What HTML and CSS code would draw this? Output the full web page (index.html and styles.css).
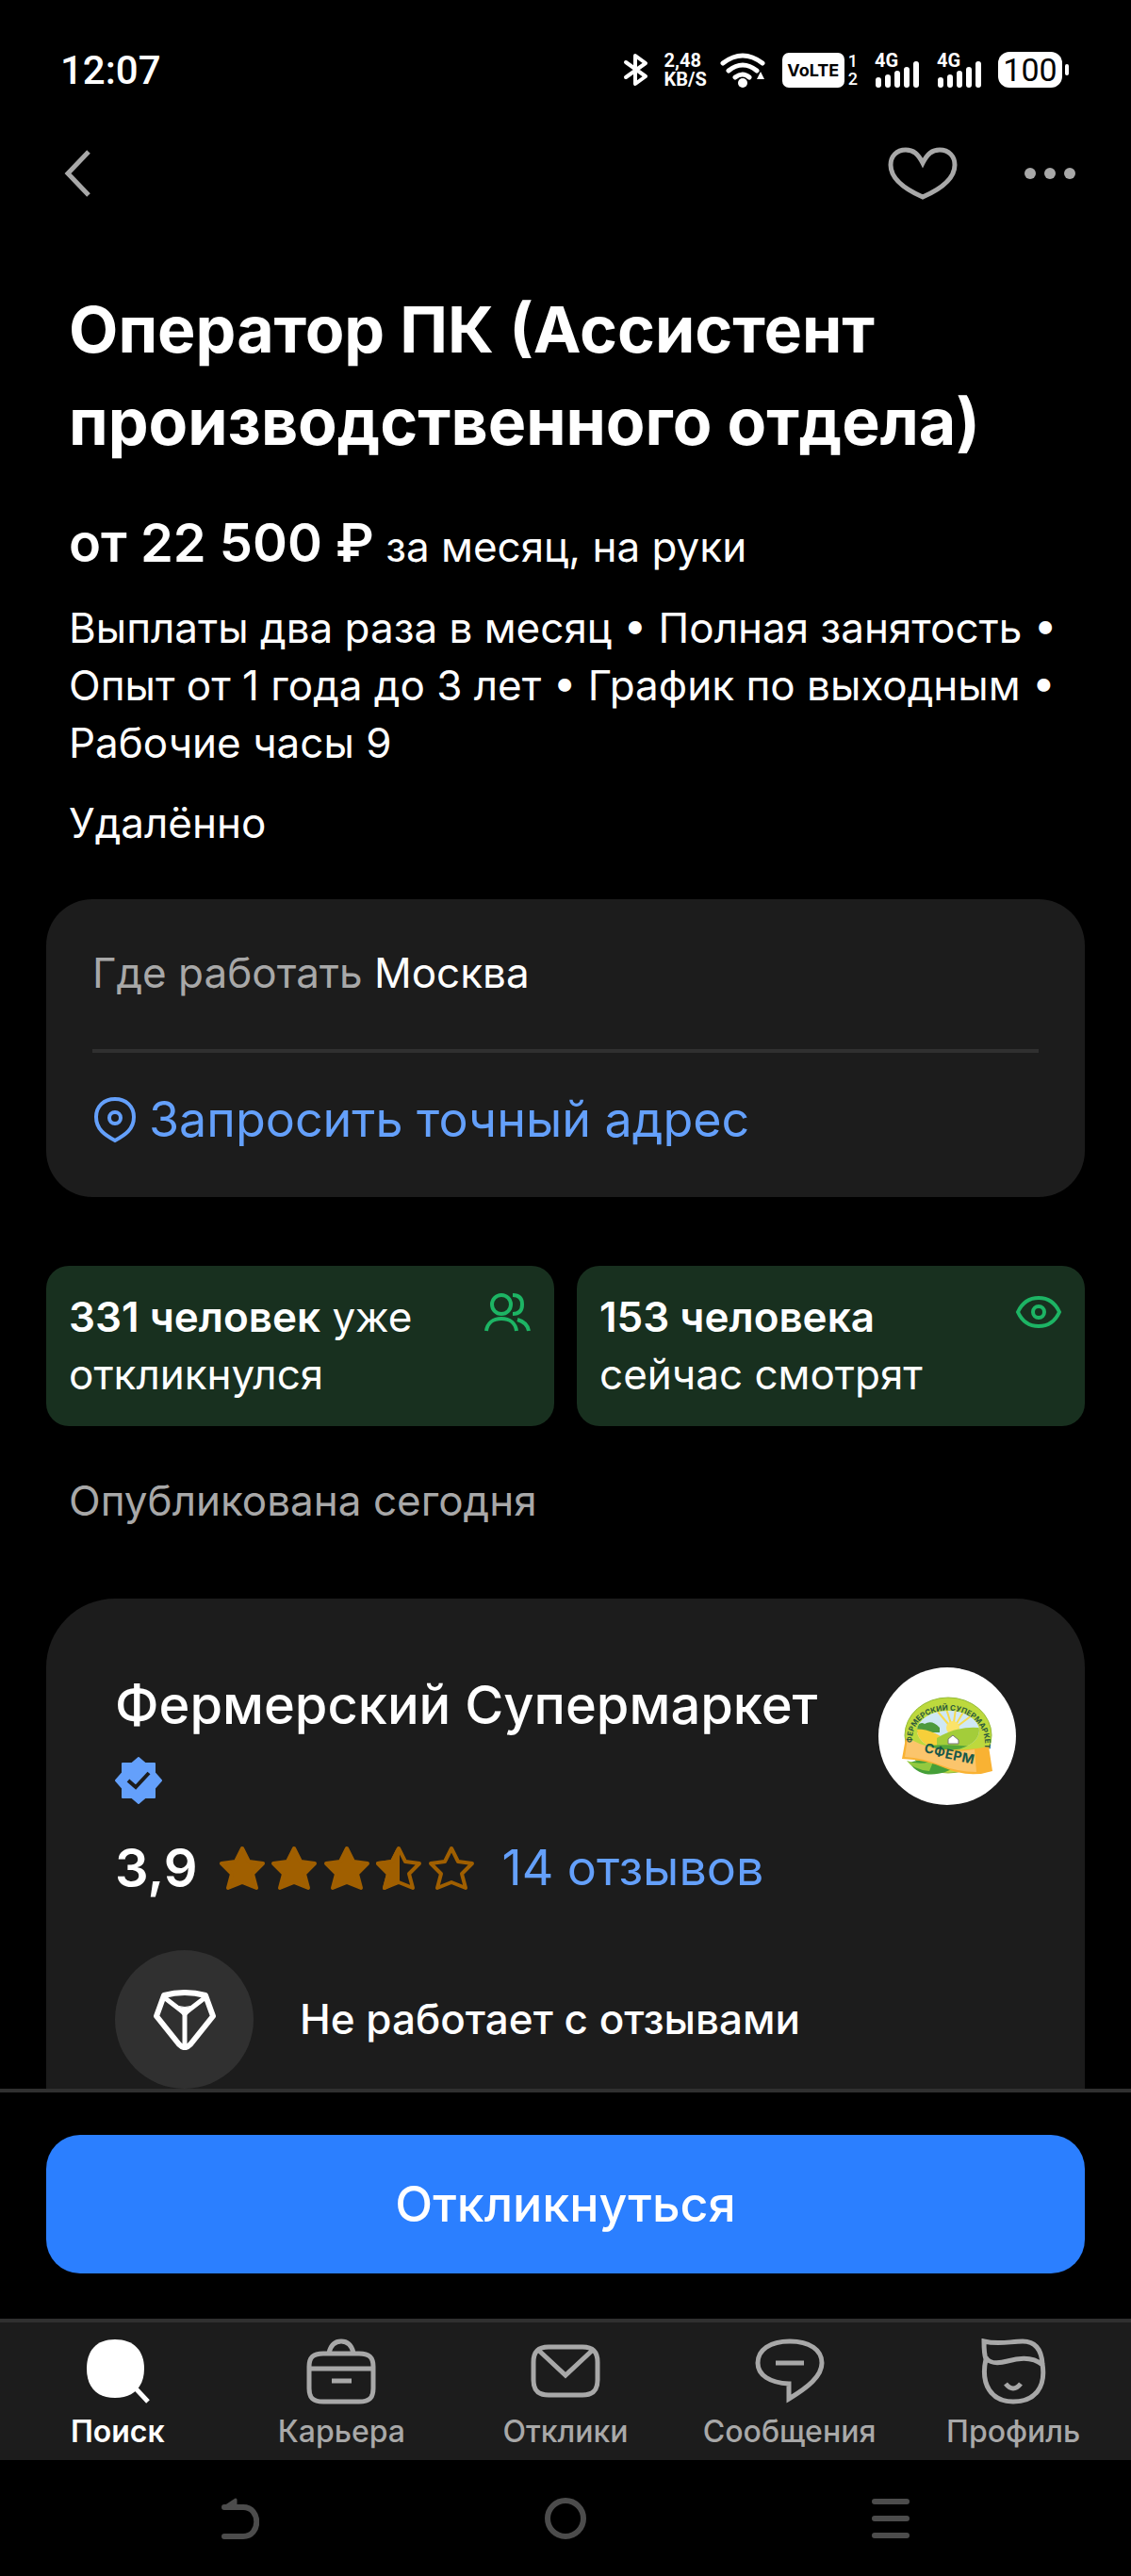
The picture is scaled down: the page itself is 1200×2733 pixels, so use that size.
FILE: index.html
```html
<!DOCTYPE html>
<html lang="ru">

<head>
  <meta charset="UTF-8">
  <meta name="viewport" content="width=device-width, initial-scale=1">
  <title>Оператор ПК (Ассистент производственного отдела)</title>
  <link rel="stylesheet" href="styles.css">
</head>

<body>
  <div class="app">
    <div class="status-bar">
      <span class="clock">12:07</span>
      <div class="status-icons">
        <svg class="bluetooth" width="28" height="36" viewBox="0 0 28 36" fill="none" stroke="#fff" stroke-width="4" stroke-linecap="round" stroke-linejoin="round">
          <path d="M3 10l21 15-11 8V3l11 8L3 26" />
        </svg>
        <span class="speed">2,48<br>KB/S</span>
        <svg class="wifi" width="48" height="38" viewBox="0 0 48 38" fill="none" stroke="#fff" stroke-width="5" stroke-linecap="round">
          <path d="M3 12q21-16 42 0M9 20q15-12 30 0M16 27q8-6 15 0" />
          <circle cx="24" cy="33" r="5" fill="#fff" stroke="none" />
          <path d="M43 21l4 8h-8z" fill="#fff" stroke="none" />
        </svg>
        <span class="volte">VoLTE</span>
        <span class="sims">1<br>2</span>
        <span class="signal">
          <span class="signal-type">4G</span>
          <svg width="48" height="28" viewBox="0 0 48 28" stroke="#fff" stroke-width="6" stroke-linecap="round">
            <path d="M4 20v5M14 17v8M24 13v12M34 9v16M44 3v22" />
          </svg>
        </span>
        <span class="signal">
          <span class="signal-type">4G</span>
          <svg width="48" height="28" viewBox="0 0 48 28" stroke="#fff" stroke-width="6" stroke-linecap="round">
            <path d="M4 20v5M14 17v8M24 13v12M34 9v16M44 3v22" />
          </svg>
        </span>
        <span class="battery">100</span>
        <span class="battery-tip"></span>
      </div>
    </div>

    <header class="top-bar">
      <button class="icon-btn" aria-label="Назад">
        <svg width="32" height="50" viewBox="0 0 32 50" fill="none" stroke="#a8a8a8" stroke-width="5">
          <path d="M28 2L6 25l22 23" />
        </svg>
      </button>
      <div class="top-actions">
        <button class="icon-btn" aria-label="В избранное">
          <svg width="74" height="56" viewBox="0 0 74 56" fill="none" stroke="#a8a8a8" stroke-width="5">
            <path d="M37 17C32 7 27 3 19 3 9 3 3 10 3 19c0 16 18 27 34 34 16-7 34-18 34-34C71 10 65 3 55 3c-8 0-13 4-18 14z" />
          </svg>
        </button>
        <button class="icon-btn" aria-label="Ещё">
          <svg width="56" height="14" viewBox="0 0 56 14" fill="#a8a8a8">
            <circle cx="7" cy="7" r="6" />
            <circle cx="28" cy="7" r="6" />
            <circle cx="49" cy="7" r="6" />
          </svg>
        </button>
      </div>
    </header>

    <main class="content">
      <section class="vacancy">
        <h1>Оператор ПК (Ассистент производственного отдела)</h1>
        <p class="salary"><strong>от 22 500 ₽</strong> за месяц, на руки</p>
        <p class="terms">Выплаты два раза в месяц • Полная занятость • Опыт от 1 года до 3 лет • График по выходным • Рабочие часы 9</p>
        <p class="remote">Удалённо</p>
      </section>

      <section class="address">
        <p class="place"><span class="muted">Где работать</span> Москва</p>
        <a class="address-link" href="#address">
          <svg width="48" height="50" viewBox="0 0 48 50" fill="none" stroke="currentColor" stroke-width="4">
            <path d="M24 3C12 3 4 11 4 22c0 13 9 19 20 25 11-6 20-12 20-25C44 11 36 3 24 3z" />
            <circle cx="24" cy="23" r="6" />
          </svg>
          Запросить точный адрес
        </a>
      </section>

      <section class="stats">
        <div class="stat">
          <p><strong>331 человек</strong> уже откликнулся</p>
          <svg width="50" height="42" viewBox="0 0 50 42" fill="none" stroke="#1db464" stroke-width="4">
            <circle cx="18" cy="13" r="10" />
            <path d="M30 3c7 0 10 4 10 10s-3 10-10 10M2 41c1-8 7-13 16-13s15 5 16 13M35 29c7 2 11 6 12 12" />
          </svg>
        </div>
        <div class="stat">
          <p><strong>153 человека</strong> сейчас смотрят</p>
          <svg width="50" height="42" viewBox="0 0 50 42" fill="none" stroke="#1db464" stroke-width="4">
            <path d="M3 21C8 10 15 6 25 6s17 4 22 15c-5 11-12 15-22 15S8 32 3 21z" />
            <circle cx="25" cy="21" r="6" />
          </svg>
        </div>
      </section>

      <p class="published">Опубликована сегодня</p>

      <section class="company">
        <div class="company-head">
          <h2>
            Фермерский Супермаркет
            <svg class="verified" width="50" height="50" viewBox="0 0 50 50">
              <path d="M25 1l7 6h10v10l7 8-7 8v10H32l-7 6-7-6H8V33l-7-8 7-8V7h10z" fill="#64a0fb" stroke="#64a0fb" stroke-width="2" stroke-linejoin="round" />
              <path d="M14 25l8 7 14-15" fill="none" stroke="#1c1c1c" stroke-width="4" />
            </svg>
          </h2>
          <svg class="logo" width="146" height="146" viewBox="0 0 146 146">
            <defs>
              <path id="ring" d="M36 80C32 35 115 32 113 84" />
              <clipPath id="field"><ellipse cx="74" cy="67" rx="33" ry="21" /></clipPath>
            </defs>
            <circle cx="73" cy="73" r="73" fill="#fff" />
            <ellipse cx="74" cy="72" rx="46" ry="40" fill="#bdd93d" stroke="#94bb38" />
            <g clip-path="url(#field)">
              <path d="M30 40h90v60H30z" fill="#cfe8f5" />
              <path d="M79 66L63 47M79 66L72 44M79 66L82 44M79 66L91 46M79 66L99 51" stroke="#f7db4f" stroke-width="2" />
              <circle cx="79" cy="64" r="7" fill="#fbe36a" />
              <path d="M39 64q5-7 10-4 8-5 16 4v5H39z" fill="#4d9a3e" />
              <path d="M36 66q20-3 44 17l-44 2z" fill="#f6cf3a" />
              <path d="M62 75q25-15 52-10v36H62z" fill="#a3cd3a" />
              <path d="M52 83q28-2 58 2v20H52z" fill="#55a63a" />
              <path d="M74 76l5-4 6 5v4H74z" fill="#fff" stroke="#777" />
            </g>
            <path d="M33 101c12 20 38 12 50 4-13-8-37-9-50-4z" fill="#459f38" />
            <path d="M30 99q17 6 29-1l-5 12q-18-2-24-11z" fill="#93c93f" />
            <path d="M29 75q35 19 88 9l4 26q-24 8-50-3-20-9-46-10z" fill="#f9b233" />
            <path d="M31 75q35 19 71 12l2 24q-20 0-37-7-20-8-39-9z" fill="#fbc56c" />
            <text class="logo-ring"><textPath href="#ring">ФЕРМЕРСКИЙ СУПЕРМАРКЕТ</textPath></text>
            <text class="logo-name" x="48" y="90" rotate="12" dy="0 3 3 2 2">СФЕРМ</text>
          </svg>
        </div>
        <div class="rating">
          <span class="score">3,9</span>
          <svg width="274" height="50" viewBox="0 0 274 50" fill="#a05f00" stroke="#a05f00" stroke-width="4" stroke-linejoin="round">
            <defs>
              <path id="star" d="M25 4l7 14 15 2-11 11 4 15-15-6-15 6 4-15L3 20l15-2z" />
            </defs>
            <use href="#star" />
            <use href="#star" x="55" />
            <use href="#star" x="111" />
            <use href="#star" x="166" fill="none" />
            <path d="M190 6v33l-14 7 4-15-11-11 15-2z" />
            <use href="#star" x="222" fill="none" />
          </svg>
          <a href="#reviews">14 отзывов</a>
        </div>
        <div class="feature">
          <span class="feature-icon">
            <svg width="68" height="64" viewBox="0 0 68 64" fill="none" stroke="#fff" stroke-width="6" stroke-linejoin="round">
              <path d="M12 6Q34 0 56 6l8 22-24 30q-6 6-12 0L4 28z" />
              <path d="M12 8l22 17L56 8" stroke-width="5" />
              <path d="M34 24v36" stroke-width="5" />
              <path d="M24 17q10 3 20 0l-10 12z" fill="#fff" stroke-width="1" />
            </svg>
          </span>
          <p>Не работает с отзывами</p>
        </div>
      </section>
    </main>

    <div class="apply">
      <button class="apply-btn">Откликнуться</button>
    </div>

    <nav class="tabs">
      <a class="tab active" href="#search">
        <svg width="74" height="70" viewBox="0 0 74 70">
          <path d="M34 1c20 0 31 12 31 31S54 63 34 63 4 51 4 32 14 1 34 1z" fill="#fff" />
          <path d="M54 51l15 16" stroke="#fff" stroke-width="5" />
        </svg>
        Поиск
      </a>
      <a class="tab" href="#career">
        <svg width="74" height="70" viewBox="0 0 74 70" fill="none" stroke="currentColor" stroke-width="5">
          <path d="M18 16h38c11 0 15 4 15 14v23c0 10-4 14-15 14H18C7 67 3 63 3 53V30c0-10 4-14 15-14zM24 15c2-8 7-12 13-12s11 4 13 12M3 32h68M27 45h21" />
        </svg>
        Карьера
      </a>
      <a class="tab" href="#responses">
        <svg width="74" height="70" viewBox="0 0 74 70" fill="none" stroke="currentColor" stroke-width="5">
          <path d="M19 9h36c11 0 16 5 16 16v19c0 11-5 16-16 16H19C8 60 3 55 3 44V25C3 14 8 9 19 9zM9 13l28 26 28-26" />
        </svg>
        Отклики
      </a>
      <a class="tab" href="#messages">
        <svg width="74" height="70" viewBox="0 0 74 70" fill="none" stroke="currentColor" stroke-width="5">
          <path d="M37 3C16 3 3 12 3 26c0 13 13 21 33 22v16c20-12 35-24 35-38C71 12 58 3 37 3zM22 26h30" />
        </svg>
        Сообщения
      </a>
      <a class="tab" href="#profile">
        <svg width="74" height="70" viewBox="0 0 74 70" fill="none" stroke="currentColor" stroke-width="5">
          <path d="M6 3c16 4 28 0 41 0 14 0 20 9 21 24 4 25-8 40-31 40S2 49 8 22C6 16 6 10 6 3zM8 20c3 6 12 7 23 4 14-4 28-4 37 4" />
          <path d="M29 48q8 10 16 0" />
        </svg>
        Профиль
      </a>
    </nav>

    <div class="system-nav">
      <button class="icon-btn" aria-label="Назад">
        <svg width="40" height="44" viewBox="0 0 40 44" fill="none" stroke="#4c4c4c" stroke-width="6" stroke-linecap="round" stroke-linejoin="round">
          <path d="M3 41h20c19 0 19-31 0-31H3" />
          <path d="M3 10l12-8v8z" fill="#4c4c4c" stroke-width="3" />
        </svg>
      </button>
      <button class="icon-btn" aria-label="Домой">
        <svg width="44" height="44" viewBox="0 0 44 44" fill="none" stroke="#4c4c4c" stroke-width="6">
          <circle cx="22" cy="22" r="19" />
        </svg>
      </button>
      <button class="icon-btn" aria-label="Приложения">
        <svg width="40" height="44" viewBox="0 0 40 44" stroke="#4c4c4c" stroke-width="6" stroke-linecap="round">
          <path d="M3 4h34M3 22h34M3 40h34" />
        </svg>
      </button>
    </div>
  </div>
</body>

</html>
```

FILE: styles.css
```css
* {
  box-sizing: border-box;
}

body {
  margin: 0;
  background-color: #000;
  color: #fff;
  font-family: Inter, sans-serif;
  font-size: 44px;
  line-height: 61px;
}

h1,
h2,
p {
  margin: 0;
}

a {
  color: #64a0fb;
  text-decoration: none;
}

svg {
  display: block;
  flex: none;
}

.app {
  display: flex;
  flex-direction: column;
  height: 100vh;
}

/* status bar */
.status-bar {
  display: flex;
  align-items: center;
  justify-content: space-between;
  height: 148px;
  padding: 0 66px 0 64px;
  font-family: Roboto, sans-serif;
}

.clock {
  font-size: 42px;
  font-weight: 500;
}

.status-icons {
  display: flex;
  align-items: center;
}

.speed {
  margin-left: 16px;
  font-size: 20px;
  font-weight: 700;
  line-height: 20px;
}

.wifi {
  margin-left: 14px;
}

.volte {
  width: 66px;
  margin-left: 18px;
  border-radius: 7px;
  background-color: #fff;
  color: #000;
  font-family: Inter, sans-serif;
  font-size: 18px;
  font-weight: 700;
  line-height: 37px;
  text-align: center;
}

.sims {
  margin-left: 4px;
  font-size: 18px;
  font-weight: 500;
  line-height: 19px;
}

.signal {
  position: relative;
  margin-left: 18px;
  padding-top: 10px;
}

.signal-type {
  position: absolute;
  top: 0;
  left: 0;
  font-size: 20px;
  font-weight: 700;
  line-height: 18px;
}

.battery {
  width: 68px;
  margin-left: 17px;
  border-radius: 12px;
  background-color: #fff;
  color: #000;
  font-size: 34px;
  line-height: 38px;
  text-align: center;
}

.battery-tip {
  width: 4px;
  height: 12px;
  margin-left: 3px;
  border-radius: 2px;
  background-color: #fff;
}

/* top bar */
.top-bar {
  display: flex;
  align-items: center;
  justify-content: space-between;
  height: 72px;
  padding: 0 58px 0 66px;
}

.top-actions {
  display: flex;
  align-items: center;
  gap: 70px;
}

.icon-btn {
  padding: 0;
  border: none;
  background: none;
  cursor: pointer;
}

/* vacancy */
.content {
  flex: 1;
  min-height: 0;
  overflow: hidden;
  padding: 80px 49px 0;
}

.vacancy {
  padding: 0 24px 50px;
}

h1 {
  margin-bottom: 44px;
  font-size: 68px;
  font-weight: 700;
  line-height: 98px;
}

.salary {
  margin-bottom: 20px;
  line-height: 72px;
}

.salary strong {
  font-size: 56px;
  font-weight: 600;
}

.terms {
  margin-bottom: 24px;
}

.muted {
  color: #a8a8a8;
}

.address {
  margin-bottom: 73px;
  padding: 48px 49px 52px;
  border-radius: 49px;
  background-color: #1c1c1c;
}

.place {
  padding-bottom: 50px;
  border-bottom: 4px solid #303030;
}

.address-link {
  display: flex;
  align-items: center;
  gap: 12px;
  margin-top: 40px;
  font-size: 52px;
}

.stats {
  display: grid;
  grid-template-columns: 1fr 1fr;
  gap: 24px;
  margin-bottom: 49px;
}

.stat {
  display: flex;
  justify-content: space-between;
  gap: 24px;
  padding: 24px;
  border-radius: 24px;
  background-color: #18301f;
}

.stat strong {
  font-weight: 600;
}

.stat svg {
  margin-top: 4px;
}

.published {
  margin: 0 24px 73px;
  color: #a8a8a8;
}

/* company */
.company {
  padding: 73px;
  border-radius: 73px;
  background-color: #1c1c1c;
}

.company-head {
  display: flex;
  justify-content: space-between;
  gap: 49px;
  margin-bottom: 35px;
}

h2 {
  font-size: 56px;
  font-weight: 500;
  line-height: 80px;
}

.verified {
  margin-top: 15px;
}

.logo-ring {
  fill: #2d5b3c;
  font-size: 8px;
  font-weight: 700;
}

.logo-name {
  fill: #17584a;
  font-size: 14px;
  font-weight: 700;
}

.rating {
  display: flex;
  align-items: center;
  margin-bottom: 55px;
  font-size: 52px;
  line-height: 64px;
}

.score {
  font-size: 56px;
  font-weight: 600;
}

.rating svg {
  margin: 0 27px 0 22px;
}

.feature {
  display: flex;
  align-items: center;
  gap: 49px;
  font-weight: 500;
}

.feature-icon {
  display: flex;
  align-items: center;
  justify-content: center;
  width: 147px;
  height: 147px;
  border-radius: 50%;
  background-color: #303030;
}

/* bottom */
.apply {
  padding: 45px 49px 48px;
  border-top: 4px solid #303030;
}

.apply-btn {
  display: block;
  width: 100%;
  height: 147px;
  border: none;
  border-radius: 36px;
  background-color: #2b7fff;
  color: #fff;
  font-family: inherit;
  font-size: 52px;
  font-weight: 500;
  cursor: pointer;
}

.tabs {
  display: flex;
  padding: 17px 6px 10px;
  border-top: 4px solid #303030;
  background-color: #1c1c1c;
}

.tab {
  display: flex;
  flex: 1;
  flex-direction: column;
  align-items: center;
  gap: 9px;
  color: #a8a8a8;
  font-size: 32px;
  font-weight: 500;
  line-height: 40px;
}

.tab.active {
  color: #fff;
  font-weight: 600;
}

.system-nav {
  display: flex;
  align-items: center;
  justify-content: space-between;
  height: 123px;
  padding: 0 235px;
}
```
